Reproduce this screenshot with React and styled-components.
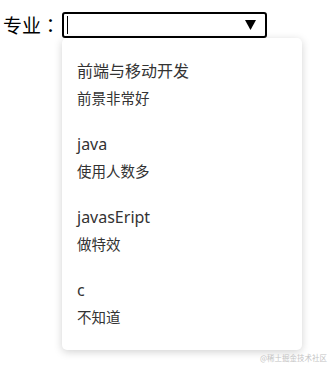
import styled, { createGlobalStyle } from "styled-components";

const GlobalStyle = createGlobalStyle`
    html, body {
        margin: 0;
        padding: 0;
        background: #fff;
    }
    body {
        font-family: "Noto Sans", "Noto Sans CJK SC", sans-serif;
    }
`;

const StyledPage = styled.div`
    position: relative;
    width: 336px;
    height: 371px;
    box-sizing: border-box;
    padding: 12px 0 0 3px;
    overflow: hidden;
`;
const StyledField = styled.div`
    display: flex;
    align-items: flex-start;
`;
const StyledLabel = styled.label`
    font-family: "Noto Sans CJK JP", "Noto Sans CJK SC", sans-serif;
    font-size: 19px;
    line-height: 26px;
    color: #000;
    width: 57px;
    white-space: nowrap;
`;
const StyledSelect = styled.div`
    position: relative;
    margin-left: 2px;
`;
const StyledInput = styled.div`
    display: flex;
    align-items: center;
    justify-content: space-between;
    box-sizing: border-box;
    width: 205px;
    height: 26px;
    border: 2px solid #000;
    border-radius: 3px;
    padding: 0 9px 0 3px;
    background: #fff;
`;
const StyledCaret = styled.span`
    width: 1px;
    height: 18px;
    background: #000;
`;
const StyledArrow = styled.svg`
    width: 11px;
    height: 10px;
    display: block;
`;
const StyledMenu = styled.ul`
    position: absolute;
    top: 26px;
    left: 0;
    width: 240px;
    margin: 0;
    padding: 10px 0;
    list-style: none;
    background: #fff;
    border-radius: 5px;
    box-shadow: 0 2px 8px rgba(0, 0, 0, .18);
`;
const StyledItem = styled.li`
    padding: 12px 15px;
    color: #333;
`;
const StyledTitle = styled.div`
    font-size: 16px;
    line-height: 22px;
`;
const StyledDesc = styled.div`
    margin-top: 5px;
    font-size: 14.5px;
    line-height: 22px;
`;
const StyledMark = styled.span`
    position: absolute;
    right: 9px;
    bottom: 8px;
    font-family: "Noto Sans CJK SC", sans-serif;
    font-size: 7.5px;
    line-height: 10px;
    color: #c4c4c4;
`;

const options = [
    { title: "前端与移动开发", desc: "前景非常好" },
    { title: "java", desc: "使用人数多" },
    { title: "javasEript", desc: "做特效" },
    { title: "c", desc: "不知道" },
];

const App = () => {
    return (
        <>
            <GlobalStyle/>
            <StyledPage>
                <StyledField>
                    <StyledLabel>专业：</StyledLabel>
                    <StyledSelect>
                        <StyledInput>
                            <StyledCaret/>
                            <StyledArrow viewBox="0 0 11 10">
                                <polygon points="0,0 11,0 5.5,10" fill="#000"/>
                            </StyledArrow>
                        </StyledInput>
                        <StyledMenu>
                            {options.map((o) => (
                                <StyledItem key={o.title}>
                                    <StyledTitle>{o.title}</StyledTitle>
                                    <StyledDesc>{o.desc}</StyledDesc>
                                </StyledItem>
                            ))}
                        </StyledMenu>
                    </StyledSelect>
                </StyledField>
                <StyledMark>@稀土掘金技术社区</StyledMark>
            </StyledPage>
        </>
    )
};
export default App;
